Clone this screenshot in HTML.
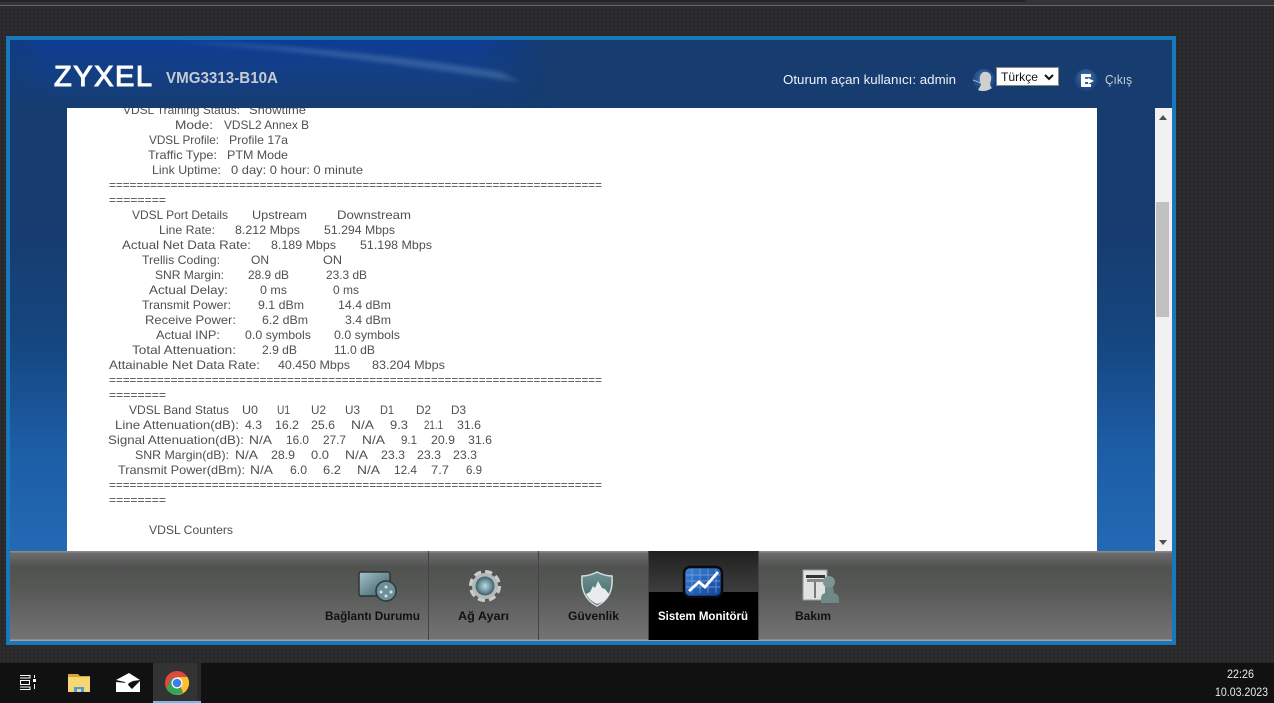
<!DOCTYPE html>
<html lang="tr"><head><meta charset="utf-8"><title>Zyxel VMG3313-B10A</title>
<style>
html,body{margin:0;padding:0;background:#2b2b2d;overflow:hidden}
body{width:1274px;height:703px;position:relative;font-family:"Liberation Sans",sans-serif}
div{position:absolute;box-sizing:border-box}
svg{position:absolute;left:0;top:0}
</style></head><body>
<div style="left:0;top:0;width:1274px;height:703px;background-color:#2c2c2e;background-image:radial-gradient(#262628 1px,transparent 1.2px);background-size:4px 4px"></div>
<div style="left:0;top:0;width:1274px;height:5px;background:#333438"></div>
<div style="left:0;top:0;width:1025px;height:2px;background:#232428"></div>
<div style="left:0;top:5px;width:1274px;height:1px;background:#66676a"></div>

<div style="left:6px;top:36px;width:1170px;height:609px;background:#1878bc"></div>
<div style="left:10px;top:40px;width:1162px;height:511px;background:linear-gradient(#163c70 0,#163c70 190px,#15467f 300px,#1c5ea6 410px,#2469b4 511px)"></div>
<div style="left:10px;top:40px;width:540px;height:68px;background:linear-gradient(#0e3c94 0,#123f86 45%,#163c70 100%);-webkit-mask-image:linear-gradient(90deg,rgba(0,0,0,.5) 0,#000 40px,#000 460px,transparent 540px)"></div>
<svg width="1274" height="703"><defs><filter id="bl" x="-10%" y="-60%" width="120%" height="220%"><feGaussianBlur stdDeviation="2.500"/></filter></defs><path d="M170 41 C280 48 390 62 520 82 L500 72 C390 54 270 44 170 41Z" fill="#6d95c4" opacity=".4" filter="url(#bl)"/></svg>

<div style="left:67px;top:108px;width:1030px;height:443px;background:#fff"></div>
<div style="left:1155px;top:108px;width:17px;height:443px;background:#f1f1f1"></div>
<div style="left:1156px;top:202px;width:13px;height:115px;background:#c1c1c1"></div>

<svg width="1274" height="703" style="font-family:'Liberation Sans',sans-serif">
<defs><clipPath id="c"><rect x="67" y="108" width="1030" height="443"/></clipPath>
<radialGradient id="av" cx=".5" cy=".4"><stop offset="0" stop-color="#4a76ae"/><stop offset="1" stop-color="#1d4884"/></radialGradient></defs>
<path d="M1159 120l4-5 4 5z" fill="#505050"/><path d="M1159 540l4 5 4-5z" fill="#505050"/>
<text x="54" y="86" font-size="29" fill="#fff" stroke="#fff" stroke-width="1.100" textLength="98" lengthAdjust="spacing">ZYXEL</text>
<text x="166" y="83" font-size="16" font-weight="bold" fill="#c6cbd3" textLength="112" lengthAdjust="spacingAndGlyphs">VMG3313-B10A</text>
<text x="783" y="84" font-size="13" fill="#eef3f8" textLength="173" lengthAdjust="spacingAndGlyphs">Oturum açan kullanıcı:  admin</text>
<text x="1105" y="84" font-size="13" fill="#c9ced6" textLength="27" lengthAdjust="spacingAndGlyphs">Çıkış</text>
<circle cx="984" cy="80" r="11" fill="url(#av)"/><path d="M978 90l3-5c-2-4-2-12 3-13 6-1 8 4 7 8l-1 4 1 3 1 1c-4 3-10 4-14 2z" fill="#d0d0d0"/><path d="M973 80l8 3" stroke="#9db3d0" stroke-width="1"/>
<rect x="996.500" y="67.500" width="62" height="18" fill="#fff" stroke="#888"/>
<text x="1001" y="81" font-size="12" fill="#111" textLength="37" lengthAdjust="spacingAndGlyphs">Türkçe</text>
<path d="M1045 75l4 4 4-4" fill="none" stroke="#111" stroke-width="2"/>
<circle cx="1086" cy="80" r="11" fill="url(#av)"/><path d="M1081 74h10v3h-6v2h3v-1l6 3-6 3v-2h-3v2h6v3h-10z" fill="#fff"/>

<g clip-path="url(#c)" font-size="12" fill="#505050">
<text x="123" y="114" textLength="117" lengthAdjust="spacingAndGlyphs">VDSL Training Status:</text><text x="249" y="114" textLength="57" lengthAdjust="spacingAndGlyphs">Showtime</text>
<text x="175" y="129" textLength="38" lengthAdjust="spacingAndGlyphs">Mode:</text><text x="224" y="129" textLength="85" lengthAdjust="spacingAndGlyphs">VDSL2 Annex B</text>
<text x="149" y="144" textLength="70" lengthAdjust="spacingAndGlyphs">VDSL Profile:</text><text x="229" y="144" textLength="59" lengthAdjust="spacingAndGlyphs">Profile 17a</text>
<text x="148" y="159" textLength="69" lengthAdjust="spacingAndGlyphs">Traffic Type:</text><text x="227" y="159" textLength="61" lengthAdjust="spacingAndGlyphs">PTM Mode</text>
<text x="152" y="174" textLength="69" lengthAdjust="spacingAndGlyphs">Link Uptime:</text><text x="231" y="174" textLength="132" lengthAdjust="spacingAndGlyphs">0 day: 0 hour: 0 minute</text>
<text x="109" y="189" textLength="493" lengthAdjust="spacingAndGlyphs">========================================================================</text>
<text x="109" y="204" textLength="57" lengthAdjust="spacingAndGlyphs">========</text>
<text x="132" y="219" textLength="96" lengthAdjust="spacingAndGlyphs">VDSL Port Details</text><text x="252" y="219" textLength="55" lengthAdjust="spacingAndGlyphs">Upstream</text><text x="337" y="219" textLength="74" lengthAdjust="spacingAndGlyphs">Downstream</text>
<text x="159" y="234" textLength="56" lengthAdjust="spacingAndGlyphs">Line Rate:</text><text x="235" y="234" textLength="65" lengthAdjust="spacingAndGlyphs">8.212 Mbps</text><text x="324" y="234" textLength="71" lengthAdjust="spacingAndGlyphs">51.294 Mbps</text>
<text x="122" y="249" textLength="129" lengthAdjust="spacingAndGlyphs">Actual Net Data Rate:</text><text x="271" y="249" textLength="65" lengthAdjust="spacingAndGlyphs">8.189 Mbps</text><text x="360" y="249" textLength="72" lengthAdjust="spacingAndGlyphs">51.198 Mbps</text>
<text x="142" y="264" textLength="78" lengthAdjust="spacingAndGlyphs">Trellis Coding:</text><text x="251" y="264" textLength="18" lengthAdjust="spacingAndGlyphs">ON</text><text x="323" y="264" textLength="19" lengthAdjust="spacingAndGlyphs">ON</text>
<text x="155" y="279" textLength="69" lengthAdjust="spacingAndGlyphs">SNR Margin:</text><text x="248" y="279" textLength="41" lengthAdjust="spacingAndGlyphs">28.9 dB</text><text x="326" y="279" textLength="41" lengthAdjust="spacingAndGlyphs">23.3 dB</text>
<text x="149" y="294" textLength="79" lengthAdjust="spacingAndGlyphs">Actual Delay:</text><text x="260" y="294" textLength="27" lengthAdjust="spacingAndGlyphs">0 ms</text><text x="333" y="294" textLength="26" lengthAdjust="spacingAndGlyphs">0 ms</text>
<text x="142" y="309" textLength="89" lengthAdjust="spacingAndGlyphs">Transmit Power:</text><text x="258" y="309" textLength="46" lengthAdjust="spacingAndGlyphs">9.1 dBm</text><text x="338" y="309" textLength="53" lengthAdjust="spacingAndGlyphs">14.4 dBm</text>
<text x="145" y="324" textLength="91" lengthAdjust="spacingAndGlyphs">Receive Power:</text><text x="262" y="324" textLength="46" lengthAdjust="spacingAndGlyphs">6.2 dBm</text><text x="345" y="324" textLength="46" lengthAdjust="spacingAndGlyphs">3.4 dBm</text>
<text x="156" y="339" textLength="64" lengthAdjust="spacingAndGlyphs">Actual INP:</text><text x="245" y="339" textLength="66" lengthAdjust="spacingAndGlyphs">0.0 symbols</text><text x="334" y="339" textLength="66" lengthAdjust="spacingAndGlyphs">0.0 symbols</text>
<text x="132" y="354" textLength="104" lengthAdjust="spacingAndGlyphs">Total Attenuation:</text><text x="262" y="354" textLength="35" lengthAdjust="spacingAndGlyphs">2.9 dB</text><text x="334" y="354" textLength="41" lengthAdjust="spacingAndGlyphs">11.0 dB</text>
<text x="109" y="369" textLength="151" lengthAdjust="spacingAndGlyphs">Attainable Net Data Rate:</text><text x="278" y="369" textLength="72" lengthAdjust="spacingAndGlyphs">40.450 Mbps</text><text x="372" y="369" textLength="73" lengthAdjust="spacingAndGlyphs">83.204 Mbps</text>
<text x="109" y="384" textLength="493" lengthAdjust="spacingAndGlyphs">========================================================================</text>
<text x="109" y="399" textLength="57" lengthAdjust="spacingAndGlyphs">========</text>
<text x="129" y="414" textLength="100" lengthAdjust="spacingAndGlyphs">VDSL Band Status</text><text x="242" y="414" textLength="16" lengthAdjust="spacingAndGlyphs">U0</text><text x="277" y="414" textLength="13" lengthAdjust="spacingAndGlyphs">U1</text><text x="311" y="414" textLength="15" lengthAdjust="spacingAndGlyphs">U2</text><text x="345" y="414" textLength="15" lengthAdjust="spacingAndGlyphs">U3</text><text x="380" y="414" textLength="14" lengthAdjust="spacingAndGlyphs">D1</text><text x="416" y="414" textLength="15" lengthAdjust="spacingAndGlyphs">D2</text><text x="451" y="414" textLength="15" lengthAdjust="spacingAndGlyphs">D3</text>
<text x="115" y="429" textLength="124" lengthAdjust="spacingAndGlyphs">Line Attenuation(dB):</text><text x="245" y="429" textLength="17" lengthAdjust="spacingAndGlyphs">4.3</text><text x="275" y="429" textLength="24" lengthAdjust="spacingAndGlyphs">16.2</text><text x="311" y="429" textLength="24" lengthAdjust="spacingAndGlyphs">25.6</text><text x="351" y="429" textLength="23" lengthAdjust="spacingAndGlyphs">N/A</text><text x="390" y="429" textLength="18" lengthAdjust="spacingAndGlyphs">9.3</text><text x="424" y="429" textLength="19" lengthAdjust="spacingAndGlyphs">21.1</text><text x="457" y="429" textLength="24" lengthAdjust="spacingAndGlyphs">31.6</text>
<text x="108" y="444" textLength="136" lengthAdjust="spacingAndGlyphs">Signal Attenuation(dB):</text><text x="249" y="444" textLength="23" lengthAdjust="spacingAndGlyphs">N/A</text><text x="286" y="444" textLength="23" lengthAdjust="spacingAndGlyphs">16.0</text><text x="323" y="444" textLength="23" lengthAdjust="spacingAndGlyphs">27.7</text><text x="362" y="444" textLength="23" lengthAdjust="spacingAndGlyphs">N/A</text><text x="401" y="444" textLength="16" lengthAdjust="spacingAndGlyphs">9.1</text><text x="431" y="444" textLength="24" lengthAdjust="spacingAndGlyphs">20.9</text><text x="468" y="444" textLength="24" lengthAdjust="spacingAndGlyphs">31.6</text>
<text x="135" y="459" textLength="94" lengthAdjust="spacingAndGlyphs">SNR Margin(dB):</text><text x="235" y="459" textLength="23" lengthAdjust="spacingAndGlyphs">N/A</text><text x="271" y="459" textLength="24" lengthAdjust="spacingAndGlyphs">28.9</text><text x="311" y="459" textLength="18" lengthAdjust="spacingAndGlyphs">0.0</text><text x="345" y="459" textLength="23" lengthAdjust="spacingAndGlyphs">N/A</text><text x="381" y="459" textLength="24" lengthAdjust="spacingAndGlyphs">23.3</text><text x="417" y="459" textLength="24" lengthAdjust="spacingAndGlyphs">23.3</text><text x="453" y="459" textLength="24" lengthAdjust="spacingAndGlyphs">23.3</text>
<text x="118" y="474" textLength="127" lengthAdjust="spacingAndGlyphs">Transmit Power(dBm):</text><text x="250" y="474" textLength="23" lengthAdjust="spacingAndGlyphs">N/A</text><text x="290" y="474" textLength="17" lengthAdjust="spacingAndGlyphs">6.0</text><text x="323" y="474" textLength="18" lengthAdjust="spacingAndGlyphs">6.2</text><text x="357" y="474" textLength="23" lengthAdjust="spacingAndGlyphs">N/A</text><text x="394" y="474" textLength="23" lengthAdjust="spacingAndGlyphs">12.4</text><text x="431" y="474" textLength="18" lengthAdjust="spacingAndGlyphs">7.7</text><text x="466" y="474" textLength="16" lengthAdjust="spacingAndGlyphs">6.9</text>
<text x="109" y="489" textLength="493" lengthAdjust="spacingAndGlyphs">========================================================================</text>
<text x="109" y="504" textLength="57" lengthAdjust="spacingAndGlyphs">========</text>
<text x="149" y="534" textLength="84" lengthAdjust="spacingAndGlyphs">VDSL Counters</text>
</g>
</svg>

<div style="left:10px;top:551px;width:1162px;height:90px;background:linear-gradient(#8a8a8a 0,#8a8a8a 1px,#6c6c6c 2px,#505250 16px,#575957 40px,#707070 82px,#727272 88px,#a0a0a0 89px)"></div>
<div style="left:428px;top:551px;width:1px;height:89px;background:#444"></div>
<div style="left:538px;top:551px;width:1px;height:89px;background:#444"></div>
<div style="left:648px;top:551px;width:111px;height:89px;background:linear-gradient(#202020 0,#3e3e3e 41px,#000 41px,#000 100%);border-left:1px solid #444;border-right:1px solid #444"></div>

<svg width="1274" height="703" style="font-family:'Liberation Sans',sans-serif">
<defs>
<linearGradient id="a" x1="0" y1="0" x2="1" y2="1"><stop offset="0" stop-color="#a9c4c8"/><stop offset="1" stop-color="#2f5a63"/></linearGradient>
<radialGradient id="g"><stop offset="0" stop-color="#bfd6dc"/><stop offset=".6" stop-color="#6d97a2"/><stop offset="1" stop-color="#3d5f68"/></radialGradient>
<linearGradient id="b" x1="0" y1="0" x2="1" y2="1"><stop offset="0" stop-color="#3f86d8"/><stop offset="1" stop-color="#0f3f96"/></linearGradient>
<linearGradient id="sh" x1="0" y1="0" x2="0" y2="1"><stop offset="0" stop-color="#6f9294"/><stop offset="1" stop-color="#3f6466"/></linearGradient>
</defs>
<rect x="359" y="572" width="31" height="24" rx="2" fill="url(#a)" stroke="#333" stroke-width="1.500"/>
<circle cx="386" cy="591" r="10" fill="#6c9098" stroke="#2e3a3c" stroke-width="1.500"/><circle cx="386" cy="587" r="1.500" fill="#dde"/><circle cx="381" cy="592" r="1.500" fill="#dde"/><circle cx="391" cy="592" r="1.500" fill="#dde"/><circle cx="386" cy="596" r="1.500" fill="#dde"/>
<circle cx="485" cy="586" r="14" fill="none" stroke="#c8cccc" stroke-width="4" stroke-dasharray="7 4"/><circle cx="485" cy="586" r="13" fill="#b4baba"/><circle cx="485" cy="586" r="9.500" fill="url(#g)"/>
<path d="M582 576c6 0 11-2 15-4 4 2 9 4 15 4 1 11-1 23-15 30-14-7-16-19-15-30z" fill="url(#sh)" stroke="#d8dcdc" stroke-width="1.500"/><path d="M586 594l4-2 3-6 2 2 3-7 4 7 3 1 4 5c-1 4-5 8-12 10-5-2-9-6-11-10z" fill="#e8ecec"/>
<rect x="684" y="567" width="38" height="30" rx="6" fill="url(#b)" stroke="#0a0a0a" stroke-width="2.500"/>
<g stroke="#7aa6dc" stroke-width=".7"><path d="M692 569v24M700 569v24M708 569v24M716 569v24M686 575h34M686 581h34M686 587h34"/></g>
<path d="M689 591l10-9 6 5 13-15" fill="none" stroke="#fff" stroke-width="2.800"/>
<rect x="803" y="570" width="24" height="30" fill="#dfe3df" stroke="#999"/><rect x="806" y="575" width="19" height="3" fill="#333"/><rect x="807" y="579" width="17" height="3" fill="#888"/><rect x="814" y="582" width="2" height="16" fill="#777"/>
<circle cx="829" cy="582" r="6" fill="#7d9494"/><path d="M825 587h8l1 6c3 1 5 3 5 6v4h-18v-4c0-3 1-5 4-6z" fill="#708888"/>
<g font-size="12" font-weight="bold" fill="#111">
<text x="325" y="620" textLength="95" lengthAdjust="spacingAndGlyphs">Bağlantı Durumu</text>
<text x="458" y="620" textLength="51" lengthAdjust="spacingAndGlyphs">Ağ Ayarı</text>
<text x="568" y="620" textLength="51" lengthAdjust="spacingAndGlyphs">Güvenlik</text>
<text x="658" y="620" textLength="90" lengthAdjust="spacingAndGlyphs" fill="#fff">Sistem Monitörü</text>
<text x="795" y="620" textLength="36" lengthAdjust="spacingAndGlyphs">Bakım</text>
</g>
</svg>

<div style="left:0;top:663px;width:1274px;height:40px;background:#111"></div>
<div style="left:153px;top:663px;width:44px;height:40px;background:#333"></div>
<div style="left:197px;top:663px;width:4px;height:40px;background:#2a2a2a"></div>
<div style="left:153px;top:701px;width:48px;height:2px;background:#76b9ed"></div>
<svg width="1274" height="703" style="font-family:'Liberation Sans',sans-serif">
<g fill="none" stroke="#fff" stroke-width="1"><path d="M20 675.500h10v2.500h-10M20 689.500h10v-2.500h-10M20.500 680.500h9v4h-9z"/></g>
<rect x="33" y="679" width="3" height="3" fill="#fff"/><rect x="34" y="675" width="1" height="3" fill="#fff"/><rect x="34" y="684" width="1" height="5" fill="#fff"/>
<path d="M68 674h10l2 2h10v16H68z" fill="#d9a62f"/><path d="M68 677h22v15H68z" fill="#f7d774"/><path d="M74 692v-5h10v5h-3v-3h-4v3z" fill="#4a9be0"/>
<path d="M116 680l13-7 11 7-7 1-4 2-2 3-2-4z" fill="#fff"/><path d="M116 682l11 1 2 3 3 3 8-8v11h-24z" fill="#fff"/>
<circle cx="177" cy="683" r="12" fill="#dd4b3e"/>
<path d="M177 683l6 10.400A12 12 0 0 1 166.600 689L172 677z" fill="#32a853"/>
<path d="M177 677h10.500A12 12 0 0 1 177 695L183 693z" fill="#fbc02d"/>
<circle cx="177" cy="683" r="5.500" fill="#fff"/><circle cx="177" cy="683" r="4.300" fill="#3f7fe8"/>
<text x="1227" y="678" font-size="12" fill="#e8e8e8" textLength="27" lengthAdjust="spacingAndGlyphs">22:26</text>
<text x="1215" y="696" font-size="12" fill="#e8e8e8" textLength="53" lengthAdjust="spacingAndGlyphs">10.03.2023</text>
</svg>
</body></html>
